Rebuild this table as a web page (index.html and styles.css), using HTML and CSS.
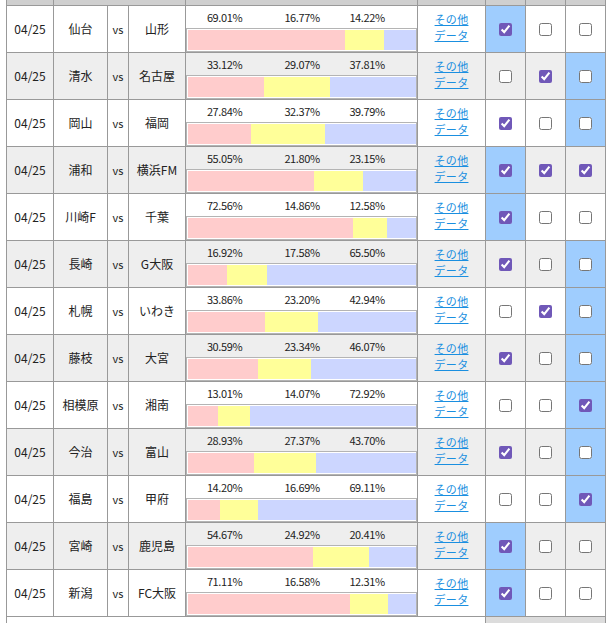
FILE: index.html
```html
<!DOCTYPE html>
<html lang="ja">
<head>
<meta charset="utf-8">
<link rel="stylesheet" href="styles.css">
</head>
<body>
<table class="toto">
<colgroup>
<col class="c-date"><col class="c-home"><col class="c-vs"><col class="c-away"><col class="c-pct"><col class="c-link"><col class="c-chk"><col class="c-chk"><col class="c-chk">
</colgroup>
<thead>
<tr class="head"><th></th><th colspan="3"></th><th></th><th></th><th></th><th></th><th></th></tr>
</thead>
<tbody>
<tr class="odd"><td>04/25</td><td class="team">仙台</td><td class="vs">vs</td><td class="team">山形</td>
<td class="pct"><div class="nums"><span>69.01%</span><span>16.77%</span><span>14.22%</span></div><div class="bar"><i class="w" style="width:69.01%"></i><i class="d" style="width:16.77%"></i><i class="l" style="width:14.22%"></i></div></td>
<td class="link"><a href="#"><span>その他</span><span>データ</span></a></td><td class="chk hl"><input type="checkbox" checked></td><td class="chk"><input type="checkbox"></td><td class="chk"><input type="checkbox"></td></tr>

<tr class="even"><td>04/25</td><td class="team">清水</td><td class="vs">vs</td><td class="team">名古屋</td>
<td class="pct"><div class="nums"><span>33.12%</span><span>29.07%</span><span>37.81%</span></div><div class="bar"><i class="w" style="width:33.12%"></i><i class="d" style="width:29.07%"></i><i class="l" style="width:37.81%"></i></div></td>
<td class="link"><a href="#"><span>その他</span><span>データ</span></a></td><td class="chk"><input type="checkbox"></td><td class="chk"><input type="checkbox" checked></td><td class="chk hl"><input type="checkbox"></td></tr>

<tr class="odd"><td>04/25</td><td class="team">岡山</td><td class="vs">vs</td><td class="team">福岡</td>
<td class="pct"><div class="nums"><span>27.84%</span><span>32.37%</span><span>39.79%</span></div><div class="bar"><i class="w" style="width:27.84%"></i><i class="d" style="width:32.37%"></i><i class="l" style="width:39.79%"></i></div></td>
<td class="link"><a href="#"><span>その他</span><span>データ</span></a></td><td class="chk"><input type="checkbox" checked></td><td class="chk"><input type="checkbox"></td><td class="chk hl"><input type="checkbox"></td></tr>

<tr class="even"><td>04/25</td><td class="team">浦和</td><td class="vs">vs</td><td class="team">横浜FM</td>
<td class="pct"><div class="nums"><span>55.05%</span><span>21.80%</span><span>23.15%</span></div><div class="bar"><i class="w" style="width:55.05%"></i><i class="d" style="width:21.80%"></i><i class="l" style="width:23.15%"></i></div></td>
<td class="link"><a href="#"><span>その他</span><span>データ</span></a></td><td class="chk hl"><input type="checkbox" checked></td><td class="chk"><input type="checkbox" checked></td><td class="chk"><input type="checkbox" checked></td></tr>

<tr class="odd"><td>04/25</td><td class="team">川崎F</td><td class="vs">vs</td><td class="team">千葉</td>
<td class="pct"><div class="nums"><span>72.56%</span><span>14.86%</span><span>12.58%</span></div><div class="bar"><i class="w" style="width:72.56%"></i><i class="d" style="width:14.86%"></i><i class="l" style="width:12.58%"></i></div></td>
<td class="link"><a href="#"><span>その他</span><span>データ</span></a></td><td class="chk hl"><input type="checkbox" checked></td><td class="chk"><input type="checkbox"></td><td class="chk"><input type="checkbox"></td></tr>

<tr class="even"><td>04/25</td><td class="team">長崎</td><td class="vs">vs</td><td class="team">G大阪</td>
<td class="pct"><div class="nums"><span>16.92%</span><span>17.58%</span><span>65.50%</span></div><div class="bar"><i class="w" style="width:16.92%"></i><i class="d" style="width:17.58%"></i><i class="l" style="width:65.50%"></i></div></td>
<td class="link"><a href="#"><span>その他</span><span>データ</span></a></td><td class="chk"><input type="checkbox" checked></td><td class="chk"><input type="checkbox"></td><td class="chk hl"><input type="checkbox"></td></tr>

<tr class="odd"><td>04/25</td><td class="team">札幌</td><td class="vs">vs</td><td class="team">いわき</td>
<td class="pct"><div class="nums"><span>33.86%</span><span>23.20%</span><span>42.94%</span></div><div class="bar"><i class="w" style="width:33.86%"></i><i class="d" style="width:23.20%"></i><i class="l" style="width:42.94%"></i></div></td>
<td class="link"><a href="#"><span>その他</span><span>データ</span></a></td><td class="chk"><input type="checkbox"></td><td class="chk"><input type="checkbox" checked></td><td class="chk hl"><input type="checkbox"></td></tr>

<tr class="even"><td>04/25</td><td class="team">藤枝</td><td class="vs">vs</td><td class="team">大宮</td>
<td class="pct"><div class="nums"><span>30.59%</span><span>23.34%</span><span>46.07%</span></div><div class="bar"><i class="w" style="width:30.59%"></i><i class="d" style="width:23.34%"></i><i class="l" style="width:46.07%"></i></div></td>
<td class="link"><a href="#"><span>その他</span><span>データ</span></a></td><td class="chk"><input type="checkbox" checked></td><td class="chk"><input type="checkbox"></td><td class="chk hl"><input type="checkbox"></td></tr>

<tr class="odd"><td>04/25</td><td class="team">相模原</td><td class="vs">vs</td><td class="team">湘南</td>
<td class="pct"><div class="nums"><span>13.01%</span><span>14.07%</span><span>72.92%</span></div><div class="bar"><i class="w" style="width:13.01%"></i><i class="d" style="width:14.07%"></i><i class="l" style="width:72.92%"></i></div></td>
<td class="link"><a href="#"><span>その他</span><span>データ</span></a></td><td class="chk"><input type="checkbox"></td><td class="chk"><input type="checkbox"></td><td class="chk hl"><input type="checkbox" checked></td></tr>

<tr class="even"><td>04/25</td><td class="team">今治</td><td class="vs">vs</td><td class="team">富山</td>
<td class="pct"><div class="nums"><span>28.93%</span><span>27.37%</span><span>43.70%</span></div><div class="bar"><i class="w" style="width:28.93%"></i><i class="d" style="width:27.37%"></i><i class="l" style="width:43.70%"></i></div></td>
<td class="link"><a href="#"><span>その他</span><span>データ</span></a></td><td class="chk"><input type="checkbox" checked></td><td class="chk"><input type="checkbox"></td><td class="chk hl"><input type="checkbox"></td></tr>

<tr class="odd"><td>04/25</td><td class="team">福島</td><td class="vs">vs</td><td class="team">甲府</td>
<td class="pct"><div class="nums"><span>14.20%</span><span>16.69%</span><span>69.11%</span></div><div class="bar"><i class="w" style="width:14.20%"></i><i class="d" style="width:16.69%"></i><i class="l" style="width:69.11%"></i></div></td>
<td class="link"><a href="#"><span>その他</span><span>データ</span></a></td><td class="chk"><input type="checkbox"></td><td class="chk"><input type="checkbox"></td><td class="chk hl"><input type="checkbox" checked></td></tr>

<tr class="even"><td>04/25</td><td class="team">宮崎</td><td class="vs">vs</td><td class="team">鹿児島</td>
<td class="pct"><div class="nums"><span>54.67%</span><span>24.92%</span><span>20.41%</span></div><div class="bar"><i class="w" style="width:54.67%"></i><i class="d" style="width:24.92%"></i><i class="l" style="width:20.41%"></i></div></td>
<td class="link"><a href="#"><span>その他</span><span>データ</span></a></td><td class="chk hl"><input type="checkbox" checked></td><td class="chk"><input type="checkbox"></td><td class="chk"><input type="checkbox"></td></tr>

<tr class="odd"><td>04/25</td><td class="team">新潟</td><td class="vs">vs</td><td class="team">FC大阪</td>
<td class="pct"><div class="nums"><span>71.11%</span><span>16.58%</span><span>12.31%</span></div><div class="bar"><i class="w" style="width:71.11%"></i><i class="d" style="width:16.58%"></i><i class="l" style="width:12.31%"></i></div></td>
<td class="link"><a href="#"><span>その他</span><span>データ</span></a></td><td class="chk hl"><input type="checkbox" checked></td><td class="chk"><input type="checkbox"></td><td class="chk"><input type="checkbox"></td></tr>

<tr class="foot"><td colspan="6"></td><td colspan="3" class="foot-gray"></td></tr>
</tbody>
</table>
</body>
</html>
```
FILE: styles.css
```css
html, body {
  margin: 0;
  padding: 0;
  background: #fff;
}
body {
  font-family: "Noto Sans CJK JP", "Noto Sans", sans-serif;
  font-size: 12px;
  color: #222;
  overflow: hidden;
}
.toto {
  border-collapse: collapse;
  table-layout: fixed;
  width: 600px;
  margin: -20px 0 0 6px;
}
.c-date { width: 47px; }
.c-home { width: 54px; }
.c-vs { width: 21px; }
.c-away { width: 57px; }
.c-pct { width: 232px; }
.c-link { width: 68px; }
.c-chk { width: 40px; }

.toto th, .toto td {
  border: 1px solid #999;
  padding: 0;
  text-align: center;
  vertical-align: middle;
  font-weight: normal;
  line-height: 16px;
}
.head th {
  height: 24px;
  background: #cfcfcf;
}
.odd td { background: #fff; }
.even td { background: #eeeeee; }
.team { font-size: 12px; }
.vs { font-size: 11px; }

.pct { height: 46px; }
.nums {
  display: grid;
  grid-template-columns: 77px 78px 52px 1fr;
  height: 22px;
  line-height: 22px;
  font-size: 11px;
  letter-spacing: -0.4px;
}
.bar {
  display: flex;
  height: 20px;
  border: 1px solid #b4b4b4;
  padding: 1px 0 1px 1px;
  background: #fff;
}
.bar i { display: block; height: 100%; }
.bar .w { background: #ffcccc; }
.bar .d { background: #ffff99; }
.bar .l { background: #ccd6ff; }

.link a {
  color: #1a8fe0;
  text-decoration: underline;
  font-size: 11px;
  letter-spacing: 0.3px;
  display: inline-flex;
  flex-direction: column;
  margin-bottom: 5px;
}
.link a span {
  display: block;
  line-height: 16px;
}
.chk input {
  display: block;
  margin: 0 auto;
  width: 13px;
  height: 13px;
  accent-color: #7058b8;
}
.odd td.hl, .even td.hl { background: #9fcdfe; }
.foot td { height: 20px; background: #fff; }
.foot td.foot-gray { background: #dcdcdc; }
```
